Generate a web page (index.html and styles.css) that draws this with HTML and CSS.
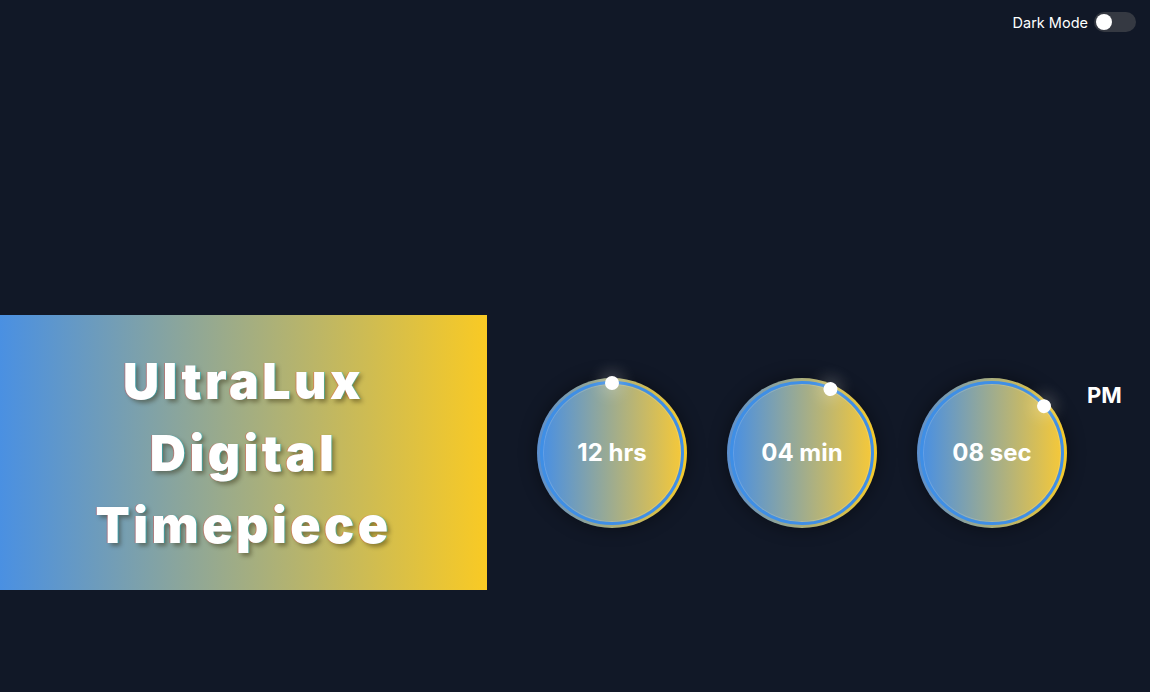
FILE: index.html
```html
<!DOCTYPE html>
<html lang="en">
<head>
<meta charset="utf-8">
<title>UltraLux Digital Timepiece</title>
<link rel="stylesheet" href="styles.css">
</head>
<body>
<header class="topbar">
  <span class="mode-label">Dark Mode</span>
  <span class="toggle"><span class="knob"></span></span>
</header>
<main class="stage">
  <section class="title-box">
    <h1 class="title">UltraLux<br>Digital<br>Timepiece</h1>
  </section>
  <section class="clocks">
    <div class="clock">
      <div class="face"><span class="value">12 hrs</span></div>
      <div class="arm" style="transform: rotate(0deg)"><span class="dot"></span></div>
    </div>
    <div class="clock">
      <div class="face"><span class="value">04 min</span></div>
      <div class="arm" style="transform: rotate(24deg)"><span class="dot"></span></div>
    </div>
    <div class="clock">
      <div class="face"><span class="value">08 sec</span></div>
      <div class="arm" style="transform: rotate(48deg)"><span class="dot"></span></div>
    </div>
    <div class="ampm">PM</div>
  </section>
</main>
</body>
</html>
```
FILE: styles.css
```css
* { box-sizing: border-box; }
html, body { margin: 0; padding: 0; }
body {
  background: #111827;
  color: #fff;
  font-family: "Inter", "Noto Sans", sans-serif;
  width: 1150px;
  height: 692px;
  overflow: hidden;
}
.topbar {
  display: flex;
  justify-content: flex-end;
  align-items: center;
  gap: 6px;
  padding: 12px 14px 0 0;
  height: 32px;
}
.mode-label {
  font-size: 14.5px;
  color: #fff;
  letter-spacing: 0;
}
.toggle {
  width: 42px;
  height: 20px;
  border-radius: 10px;
  background: #353942;
  display: flex;
  align-items: center;
  padding: 0 2px;
}
.knob {
  width: 16px;
  height: 16px;
  border-radius: 50%;
  background: #fff;
}
.stage {
  display: flex;
  align-items: center;
  margin-top: 283px;
  gap: 50px;
}
.title-box {
  width: 487px;
  height: 275px;
  background: linear-gradient(90deg, #4a90e2, #f9ca24);
  display: flex;
  align-items: center;
  justify-content: center;
}
.title {
  margin: 0;
  text-align: center;
  font-family: "Inter", sans-serif;
  font-weight: 900;
  font-size: 50px;
  line-height: 72px;
  letter-spacing: 3.5px;
  color: #fff;
  text-shadow: -1px 0 rgba(255, 60, 60, 0.35), 1px 0 rgba(0, 230, 255, 0.35), 3px 3px 4px rgba(40, 30, 0, 0.4);
}
.clocks {
  display: flex;
  align-items: flex-start;
  gap: 40px;
}
.clock {
  position: relative;
  width: 150px;
  height: 150px;
  border-radius: 50%;
  padding: 3px;
  background: linear-gradient(90deg, #5b8fcf, #f7cb2a);
  box-shadow: 0 0 18px rgba(0, 0, 0, 0.45);
}
.face {
  width: 100%;
  height: 100%;
  border-radius: 50%;
  border: 3px solid #3f8fe6;
  background: linear-gradient(90deg, #4a90e2, #f4c83a);
  box-shadow: inset 0 0 0 1px rgba(255, 255, 255, 0.15);
  display: flex;
  align-items: center;
  justify-content: center;
}
.value {
  font-size: 24px;
  font-weight: 700;
  color: #fff;
  letter-spacing: 0;
}
.arm {
  position: absolute;
  inset: 0;
}
.dot {
  position: absolute;
  left: 68px;
  top: -2px;
  width: 14px;
  height: 14px;
  border-radius: 50%;
  background: #fff;
  box-shadow: 0 0 16px 4px rgba(255, 255, 255, 0.25);
}
.ampm {
  font-size: 22px;
  font-weight: 700;
  margin-top: 4px;
  margin-left: -20px;
  color: #fff;
}
```
